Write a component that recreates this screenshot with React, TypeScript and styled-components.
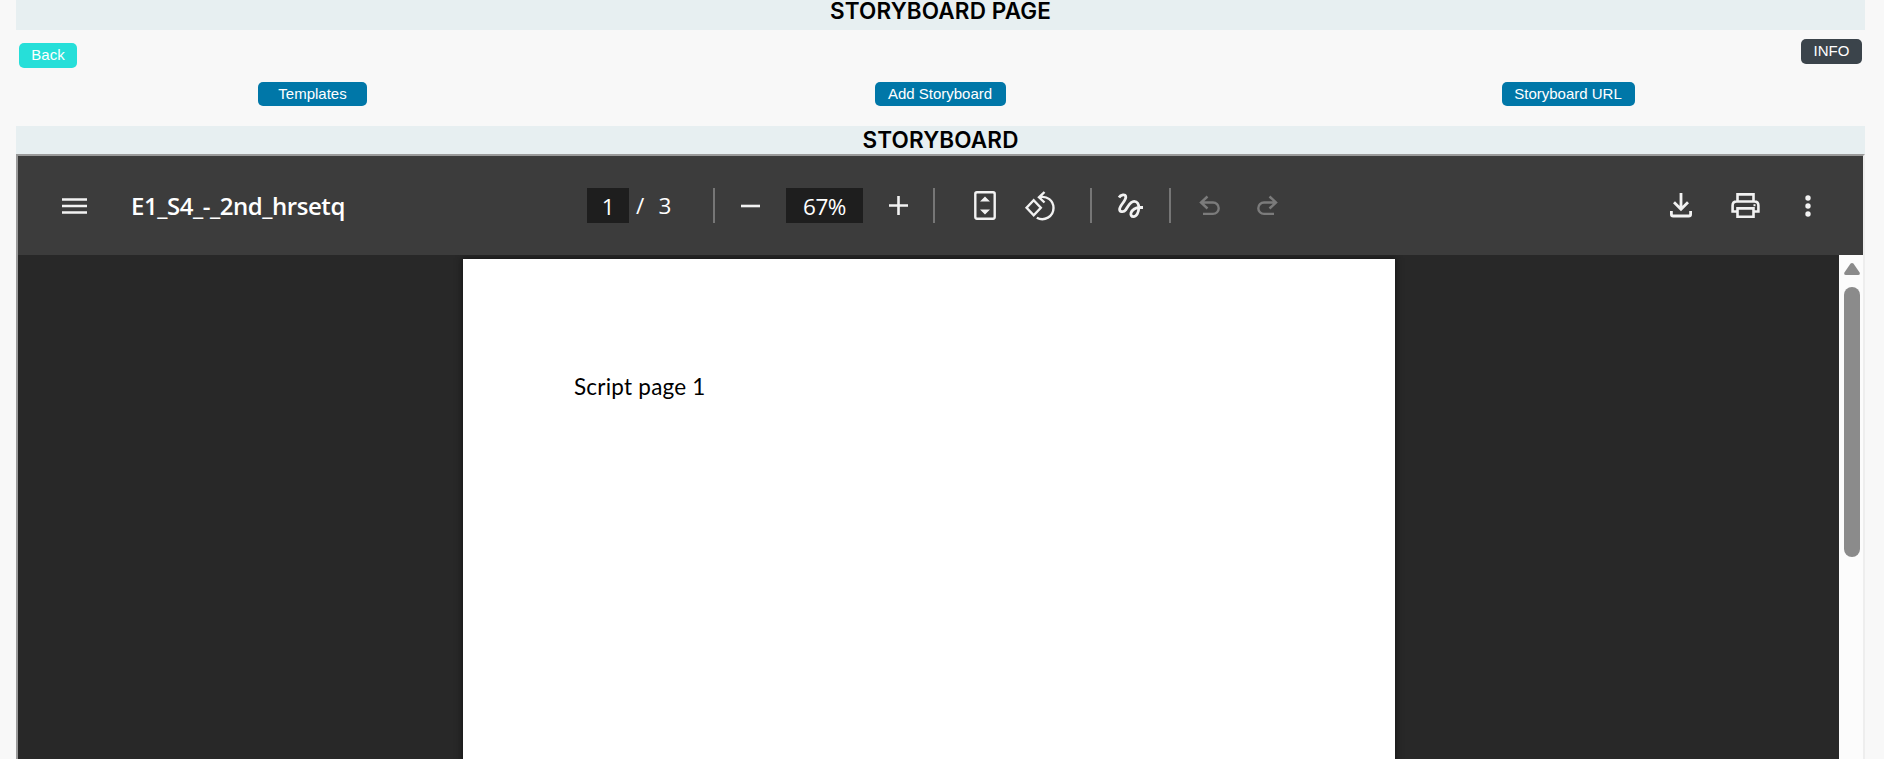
import React from "react";
import styled, { createGlobalStyle } from "styled-components";

const Global = createGlobalStyle`
  * { box-sizing: border-box; }
  html, body { margin: 0; height: 100%; overflow: hidden; background: #f8f8f8; }
  #root { height: 100%; }
`;

const Page = styled.main`
  display: flex;
  flex-direction: column;
  height: 759px;
  padding: 0 19px 0 16px;
  overflow: hidden;
  background: #f8f8f8;
`;

const Band = styled.h2<{ $height: number; $line: number }>`
  flex: none;
  margin: 0;
  height: ${(p) => p.$height}px;
  background: #e7eff1;
  color: #000;
  font: 600 22.5px/${(p) => p.$line}px Inter, sans-serif;
  letter-spacing: 0.13px;
  text-align: center;
`;

const TopRow = styled.div`
  flex: none;
  display: flex;
  justify-content: space-between;
  height: 52px;
  padding: 9px 3px 0;
`;

const Button = styled.button<{ $color: string; $width: number; $height?: number; $drop?: number }>`
  width: ${(p) => p.$width}px;
  height: ${(p) => p.$height ?? 24}px;
  margin: ${(p) => p.$drop ?? 0}px 0 0;
  padding: 0 0 1px;
  border: 0;
  border-radius: 5px;
  background: ${(p) => p.$color};
  color: #fff;
  font: 15px/22px "Liberation Sans", Arial, sans-serif;
  white-space: nowrap;
`;

const Actions = styled.div`
  flex: none;
  display: grid;
  grid-template-columns: 593px 662px 594px;
  justify-items: center;
  height: 44px;
`;

const Viewer = styled.section`
  flex: 1;
  min-height: 0;
  display: flex;
  flex-direction: column;
  border: 2px solid;
  border-color: #9a9a9a #eeeeee #eeeeee #9a9a9a;
  border-bottom: 0;
`;

const Toolbar = styled.header`
  flex: none;
  display: flex;
  align-items: center;
  height: 99px;
  padding: 0 39px 0 40px;
  background: #3c3c3c;
  color: #fff;
  font: 22.5px/35px "Open Sans", "Noto Sans", sans-serif;
`;

const Group = styled.div<{ $width: number; $end?: boolean }>`
  flex: none;
  display: flex;
  align-items: center;
  width: ${(p) => p.$width}px;
  height: 35px;
  margin-left: ${(p) => (p.$end ? "auto" : 0)};
`;

const Title = styled.span`
  margin-left: 40px;
  font-weight: 600;
  font-size: 24px;
  letter-spacing: -0.45px;
  white-space: nowrap;
`;

const Field = styled.span<{ $width: number }>`
  width: ${(p) => p.$width}px;
  height: 35px;
  background: #1e1e1e;
  letter-spacing: -0.4px;
  text-align: center;
  line-height: 37px;
`;

const Total = styled.span`
  width: 84px;
  padding-left: 7px;
  line-height: 37px;
  word-spacing: 8.5px;
`;

const Divider = styled.i`
  flex: none;
  width: 2px;
  height: 35px;
  background: #767676;
`;

const Tool = styled.button<{ $width: number; $off?: boolean; $before?: number; $after?: number }>`
  flex: none;
  display: flex;
  align-items: center;
  justify-content: center;
  width: ${(p) => p.$width}px;
  height: 35px;
  margin: 0 ${(p) => p.$after ?? 0}px 0 ${(p) => p.$before ?? 0}px;
  padding: 0;
  border: 0;
  background: none;
  color: ${(p) => (p.$off ? "#7b7b7b" : "#f2f2f2")};

  svg { display: block; flex: none; overflow: visible; }
`;

const Body = styled.div`
  flex: 1;
  min-height: 0;
  display: flex;
  background: #282828;
`;

const Canvas = styled.div`
  flex: 1;
  overflow: hidden;
  padding: 4px 0 0 445px;
`;

const Sheet = styled.article`
  width: 932px;
  height: 600px;
  padding: 112px 0 0 111px;
  background: #fff;
  box-shadow: 0 0 6px 1px #161616;
  color: #000;
  font: 22.5px/32px Lato, sans-serif;
  letter-spacing: 0.22px;
`;

const Scrollbar = styled.div`
  display: flex;
  flex-direction: column;
  width: 24px;
  padding: 8px 3px 0 5px;
  background: #fcfcfc;

  svg { display: block; }
`;

const Thumb = styled.div`
  width: 16px;
  height: 270px;
  margin-top: 12px;
  border-radius: 8px;
  background: #8b8b8b;
`;

type IconProps = { w: number; h: number; sw?: number; children: React.ReactNode };

const Icon = ({ w, h, sw = 2.4, children }: IconProps) => (
  <svg width={w} height={h} viewBox={`0 0 ${w} ${h}`} fill="none" stroke="currentColor" strokeWidth={sw}>
    {children}
  </svg>
);

const UndoPath = () => <path d="M8.5 1.5 2 7.5 8.5 13.5M2.3 7.5H14a5.7 5.7 0 0 1 0 11.4H4" />;

export default function App() {
  return (
    <>
      <Global />
      <Page>
        <Band $height={30} $line={22}>STORYBOARD PAGE</Band>
        <TopRow>
          <Button $color="#26dfd9" $width={58} $height={25} $drop={4}>Back</Button>
          <Button $color="#3b444b" $width={61} $height={25}>INFO</Button>
        </TopRow>
        <Actions>
          <Button $color="#0077a8" $width={109}>Templates</Button>
          <Button $color="#0077a8" $width={131}>Add Storyboard</Button>
          <Button $color="#0077a8" $width={133}>Storyboard URL</Button>
        </Actions>
        <Band $height={28} $line={28}>STORYBOARD</Band>
        <Viewer>
          <Toolbar>
            <Group $width={529}>
              <Tool $width={33}>
                <Icon w={25} h={18}><path d="M0 2.5h25M0 9h25M0 15.5h25" /></Icon>
              </Tool>
              <Title>E1_S4_-_2nd_hrsetq</Title>
            </Group>
            <Group $width={709}>
              <Field $width={42}>1</Field>
              <Total>/ 3</Total>
              <Divider />
              <Tool $width={71}>
                <Icon w={19} h={20} sw={2.6}><path d="M0 10h19" /></Icon>
              </Tool>
              <Field $width={77}>67%</Field>
              <Tool $width={70}>
                <Icon w={19} h={19} sw={2.6}><path d="M0 9.5h19M9.5 0v19" /></Icon>
              </Tool>
              <Divider />
              <Tool $width={68} $before={16}>
                <Icon w={22} h={29}>
                  <rect x="1.3" y="1.3" width="19.4" height="26.4" rx="1.6" />
                  <path d="m6 10.5 5-5 5 5zM6 18.5l5 5 5-5z" fill="currentColor" stroke="none" />
                </Icon>
              </Tool>
              <Tool $width={42} $after={29}>
                <Icon w={30} h={30}>
                  <path d="M8.7 9.3 15.8 16.8 8.7 24.3 1.6 16.8z" />
                  <path d="M19.5 1 14 6.3l5.5 5.2M14.5 6.3C22 4.5 28.5 9.5 28.5 17a11.2 11.2 0 0 1-16.7 9.7" />
                </Icon>
              </Tool>
              <Divider />
              <Tool $width={77}>
                <Icon w={25} h={26} sw={2.8}>
                  <path d="M1 4.5C2.5 2 7.8 .2 7.8 4.3 7.8 8 1.6 12.5 1.6 16.2c0 2.8 3.9 3.6 6.1.6C10.2 13.6 12 8.4 16.2 8.4c3.2 0 4.6 3 4.6 6.2 0 4.7-2.2 9-5.3 9-2.2 0-3-1.9-2.5-3.7.9-3.3 5-5.4 8.3-5.4H25" />
                </Icon>
              </Tool>
              <Divider />
              <Tool $width={77} $off><Icon w={22} h={21}><UndoPath /></Icon></Tool>
              <Tool $width={37} $off>
                <Icon w={22} h={21}><g transform="matrix(-1 0 0 1 22 0)"><UndoPath /></g></Icon>
              </Tool>
            </Group>
            <Group $width={160} $end>
              <Tool $width={34}>
                <Icon w={22} h={25} sw={2.8}>
                  <path d="M11 0v16M4 9.3l7 7 7-7M1.4 18v3.2q0 1.8 1.8 1.8h15.6q1.8 0 1.8-1.8V18" />
                </Icon>
              </Tool>
              <Tool $width={94}>
                <Icon w={29} h={25} sw={2.6}>
                  <path d="M6.5 8V1.4h16V8M6 18.5H1.6v-6q0-4 4-4h17.8q4 0 4 4v6H23" />
                  <path d="M6.5 15.4h16v8.3h-16z" />
                  <path d="M22.5 12.2h2" strokeWidth="2" />
                </Icon>
              </Tool>
              <Tool $width={32}>
                <Icon w={6} h={22}>
                  <g fill="currentColor" stroke="none">
                    <circle cx="3" cy="3" r="2.7" /><circle cx="3" cy="11" r="2.7" /><circle cx="3" cy="19" r="2.7" />
                  </g>
                </Icon>
              </Tool>
            </Group>
          </Toolbar>
          <Body>
            <Canvas><Sheet>Script page 1</Sheet></Canvas>
            <Scrollbar>
              <svg width="16" height="12" viewBox="0 0 16 12">
                <path d="M6.4.8q1.6-1.6 3.2 0L15.6 9.6q.8 2.4-1.6 2.4H2q-2.4 0-1.6-2.4z" fill="#8b8b8b" />
              </svg>
              <Thumb />
            </Scrollbar>
          </Body>
        </Viewer>
      </Page>
    </>
  );
}
